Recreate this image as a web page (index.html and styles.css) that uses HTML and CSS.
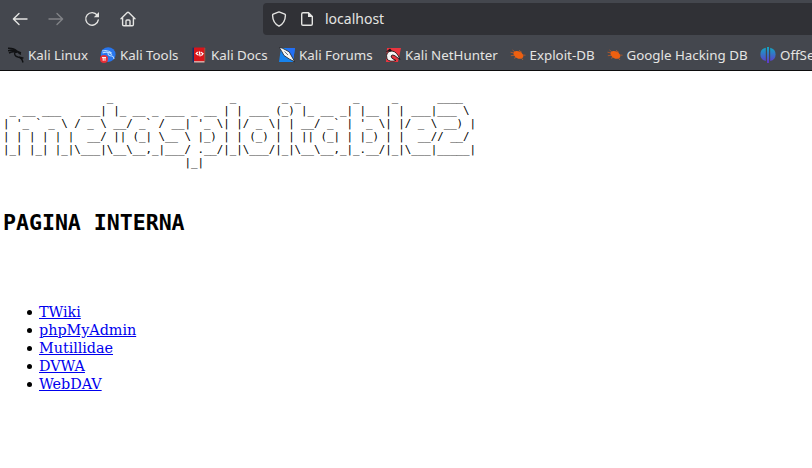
FILE: index.html
```html
<!DOCTYPE html>
<html lang="en">
<head>
<meta charset="utf-8">
<title>localhost</title>
<link rel="stylesheet" href="styles.css">
</head>
<body>
<header class="chrome">
  <div class="toolbar">
    <nav class="buttons">
      <svg class="ico" viewBox="0 0 16 16"><path d="M15 8H1.5M7 2.6L1.4 8L7 13.4"/></svg>
      <svg class="ico off" viewBox="0 0 16 16"><path d="M1 8h13.5M9 2.6l5.6 5.4L9 13.4"/></svg>
      <svg class="ico" viewBox="0 0 16 16"><path d="M13.2 4.2A6.3 6.3 0 1 0 14.3 8.9"/><path class="solid" d="M15 1v5.2H9.8z"/></svg>
      <svg class="ico" viewBox="0 0 16 16"><path d="M1 7.8L7.3 1.6Q8 1 8.7 1.6L15 7.8M2.6 6.8V13.5Q2.6 14.7 3.8 14.7H12.2Q13.4 14.7 13.4 13.5V6.8M6 14.5V10Q6 9 7 9H9Q10 9 10 10V14.5"/></svg>
    </nav>
    <div class="address">
      <svg class="ico" viewBox="0 0 16 16"><path d="M8 .9L13.8 3.2Q14.5 3.6 14.4 4.5Q14.2 12 8 15.2Q1.8 12 1.6 4.5Q1.5 3.6 2.2 3.2Z"/></svg>
      <svg class="ico page" viewBox="0 0 16 16"><path d="M9.5 1.7H4Q2.7 1.7 2.7 3V13Q2.7 14.3 4 14.3H12Q13.3 14.3 13.3 13V5.5Z"/><path class="solid" d="M9 1L14 6H9z"/></svg>
      <span>localhost</span>
    </div>
  </div>
  <nav class="bookmarks">
    <a class="bm linux"><svg viewBox="0 0 16 16"><path class="dragon" d="M0 1.2Q6 1 9 4.2L13 6M0 3.7Q5 2.4 8.5 5M1 6Q5 4 9 5.3M7 4.5Q5.6 9 10 10Q14 10.5 15 15.5M10.8 9.8L15.5 11.2M9.5 5L12.8 7.5"/></svg><span>Kali Linux</span></a>
    <a class="bm tools"><svg viewBox="0 0 16 16"><circle cx="8.2" cy="7.6" r="7.4" fill="#2876ee"/><path d="M2 4Q8 2.5 11.5 6M2.5 6Q8 3.6 12 7.6M8 5.5Q7.5 9 12 9Q13.8 9.5 14 12" fill="none" stroke="#b9dcff" stroke-width="1.1"/><circle cx="4" cy="12" r="4" fill="#e62f37"/><path d="M2 10.6H6M3.2 10.6V13.8M5 10.6V13.8" fill="none" stroke="#fff"/></svg><span>Kali Tools</span></a>
    <a class="bm docs"><svg viewBox="0 0 16 16"><path fill="#172d68" d="M.5.7h2.5v14.7H.5z"/><path fill="#d9141a" d="M2 .5h11v13.7H2z"/><path fill="#8f5c42" d="M12.3 1h1v13h-1z"/><path fill="#e9b2aa" d="M2 14.1h10.5v1.4H2z"/><path d="M5.7 5L4.2 6.7L6.6 8.3M8.6 5L11 6.6L9.4 8.6M7.2 4.3L8.2 9.3" fill="none" stroke="#fff" stroke-width="1.2"/></svg><span>Kali Docs</span></a>
    <a class="bm forums"><svg viewBox="0 0 16 16"><path fill="#1683ee" d="M2 1h14l-2 14H0z"/><path fill="#236ff5" d="M7 1h9l-2 13z"/><path d="M0 0L3.5 1.3L6.5 2.8L10.3 5L12.5 9L15.8 14.8L10.6 12.2L5 8.5L2.8 4.5Z" fill="#f4f6f7" stroke="#202126" stroke-width=".8"/><path d="M5.6 4.5L9 8" stroke="#263346" stroke-width=".7"/></svg><span>Kali Forums</span></a>
    <a class="bm hunter"><svg viewBox="0 0 16 16"><path fill="#e9353f" d="M2 1h14l-3 14H1z"/><path d="M2 12Q0 4.3 7 4Q12 4.5 15 12.5Q11.5 10 10 8.8Q7.5 7 6 9Q5.8 11.5 11 13.5Q5 15.5 2 12Z" fill="#f7f4f4" stroke="#17171a" stroke-width=".9"/><path d="M.5 5L5 1.5L7 3.8" fill="#161619"/></svg><span>Kali NetHunter</span></a>
    <a class="bm exploit"><svg viewBox="0 0 16 16"><ellipse cx="8.3" cy="7.7" rx="5.3" ry="3.5" transform="rotate(28 8 8)" fill="#ee6010"/><path d="M.5 5.2L4 6M2.5 3L5 5M9 3.3L12 5.5M.8 8.7L5 8.3M4 11.3L7 10M11 10.5L13 13M12 8L15.5 8.2" class="legs"/></svg><span>Exploit-DB</span></a>
    <a class="bm google"><svg viewBox="0 0 16 16"><ellipse cx="8.3" cy="7.7" rx="5.3" ry="3.5" transform="rotate(28 8 8)" fill="#ee6010"/><path d="M.5 5.2L4 6M2.5 3L5 5M9 3.3L12 5.5M.8 8.7L5 8.3M4 11.3L7 10M11 10.5L13 13M12 8L15.5 8.2" class="legs"/></svg><span>Google Hacking DB</span></a>
    <a class="bm offsec"><svg viewBox="0 0 16 16"><defs><linearGradient id="os" x1="0" y1="0" x2="0" y2="1"><stop stop-color="#10a9c2"/><stop offset="1" stop-color="#6335cd"/></linearGradient></defs><path fill="url(#os)" d="M5.8.7V14Q.4 12.5.4 7.4Q.4 2 5.8.7M7 0h2v16H7zM10.2.7Q15.6 2 15.6 7.4Q15.6 12.5 10.2 14z"/></svg><span>OffSec</span></a>
  </nav>
</header>
<main>
<pre class="banner">                _                  _       _ _        _     _      ____  
 _ __ ___   ___| |_ __ _ ___ _ __ | | ___ (_) |_ __ _| |__ | | ___|___ \ 
| '_ ` _ \ / _ \ __/ _` / __| '_ \| |/ _ \| | __/ _` | '_ \| |/ _ \ __) |
| | | | | |  __/ || (_| \__ \ |_) | | (_) | | || (_| | |_) | |  __// __/ 
|_| |_| |_|\___|\__\__,_|___/ .__/|_|\___/|_|\__\__,_|_.__/|_|\___|_____|
                            |_|                                          </pre>
<h1>PAGINA INTERNA</h1>
<ul>
  <li><a href="#">TWiki</a></li>
  <li><a href="#">phpMyAdmin</a></li>
  <li><a href="#">Mutillidae</a></li>
  <li><a href="#">DVWA</a></li>
  <li><a href="#">WebDAV</a></li>
</ul>
</main>
</body>
</html>
```
FILE: styles.css
```css
* { box-sizing: border-box; }
body { margin: 0; background: #fff; overflow: hidden; }
.chrome {
  height: 71px;
  background: #44474e;
  border-bottom: 1px solid #0c0c0d;
  color: #e4e4e2;
  font-family: "Noto Sans", sans-serif;
  overflow: hidden;
}
.toolbar { display: flex; height: 38px; align-items: center; padding-left: 12px; }
.buttons { display: flex; gap: 20px; width: 251px; flex: none; }
.ico { width: 16px; height: 16px; fill: none; stroke: #e4e4e2; stroke-width: 1.4; stroke-linecap: round; stroke-linejoin: round; flex: none; }
.ico .solid { fill: #e4e4e2; stroke: none; }
.off { stroke: #818387; }
.address {
  display: flex; align-items: center; flex: 1; height: 32px;
  padding-left: 8px; background: #303136; border-radius: 4px 0 0 4px;
  font-size: 14px;
}
.address span { margin-top: -1px; }
.page { margin: 0 10px 0 12px; }
.bookmarks { display: flex; height: 32px; align-items: center; padding: 2px 0 0 8px; font-size: 13.33px; }
.bm { display: flex; flex: none; gap: 4px; align-items: center; white-space: nowrap; }
.bm svg { width: 16px; height: 16px; flex: none; }
.bm svg { margin-top: -1px; }
.linux { width: 92px; }
.tools { width: 92px; }
.docs { width: 87px; gap: 3px; }
.forums { width: 106px; }
.hunter { width: 125px; }
.exploit { width: 97px; gap: 3.5px; }
.google { width: 153px; gap: 3.5px; }
.dragon { fill: none; stroke: #111214; stroke-width: 1.4; }
.legs { fill: none; stroke: #d65d1e; stroke-width: .7; }
main { padding: 20px 3px 0; color: #000; }
.banner { margin: 0; font: 10.8px/13px "DejaVu Sans Mono", monospace; letter-spacing: -.02px; }
h1 { margin: 41px 0 0; font: bold 21.6px/26px "DejaVu Sans Mono", monospace; letter-spacing: -.03px; }
ul { margin: 67px 0 0; padding-left: 36px; list-style: none; font: 14.4px/18px "DejaVu Serif", serif; letter-spacing: -.05px; }
li { position: relative; }
li::before { content: ""; position: absolute; left: -12px; top: 7px; width: 5px; height: 5px; border-radius: 50%; background: #000; }
a[href] { color: #0000ee; text-decoration: underline; }
```
